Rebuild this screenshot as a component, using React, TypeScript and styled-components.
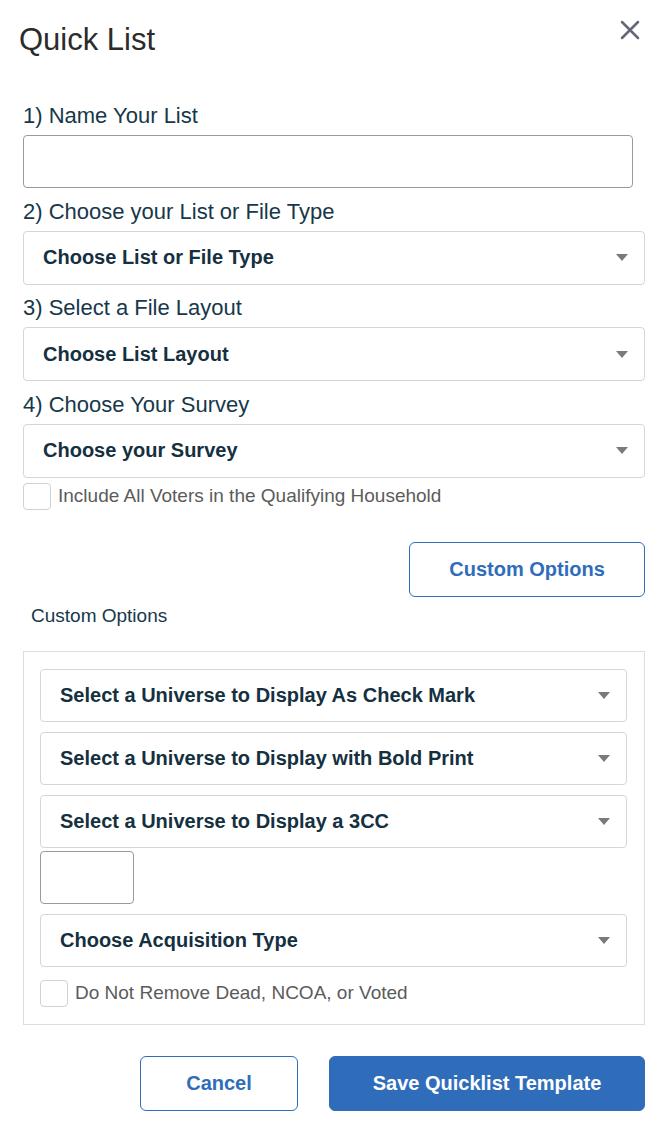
import styled, { createGlobalStyle } from "styled-components";

const GlobalStyle = createGlobalStyle`
  html, body {
    margin: 0;
    padding: 0;
    background: #fff;
    font-family: "Liberation Sans", Arial, sans-serif;
  }
  * {
    box-sizing: border-box;
  }
`;

const Modal = styled.div`
  width: 664px;
  padding: 22px 19px 10px 23px;
`;

const Header = styled.div`
  display: flex;
  justify-content: space-between;
  align-items: flex-start;
  margin-left: -4px;
  margin-bottom: 45px;
`;

const Title = styled.h1`
  margin: 0;
  font-size: 31px;
  line-height: 36px;
  font-weight: 400;
  color: #2b2b2b;
`;

const CloseButton = styled.button`
  border: 0;
  background: none;
  padding: 0;
  margin: -2px 5px 0 0;
  width: 20px;
  height: 20px;
  cursor: pointer;
  display: flex;
`;

const Form = styled.div`
  display: flex;
  flex-direction: column;
`;

const Field = styled.div`
  display: flex;
  flex-direction: column;
  gap: 6px;
  margin-bottom: 10.5px;
`;

const Label = styled.label`
  font-size: 22px;
  line-height: 26px;
  color: #17384a;
`;

const TextInput = styled.input<{ $width?: string }>`
  width: ${(p) => p.$width || "610px"};
  height: 53px;
  border: 1px solid #9a9a9a;
  border-radius: 4px;
  font-family: inherit;
  font-size: 20px;
  padding: 0 12px;
`;

const SelectBox = styled.div<{ $height?: number }>`
  display: flex;
  align-items: center;
  justify-content: space-between;
  height: ${(p) => p.$height ?? 54}px;
  padding: 0 16px 0 19px;
  border: 1px solid #d3d6da;
  border-radius: 4px;
  background: #fff;
  font-size: 20px;
  font-weight: 700;
  color: #15303f;
`;

const Caret = styled.span`
  width: 0;
  height: 0;
  border-left: 6.5px solid transparent;
  border-right: 6.5px solid transparent;
  border-top: 7px solid #7a7a7a;
`;

const CheckRow = styled.label<{ $mb?: number }>`
  display: flex;
  align-items: center;
  gap: 7px;
  margin-top: -5.5px;
  margin-bottom: ${(p) => p.$mb ?? 0}px;
  font-size: 19px;
  color: #5b5b5b;
`;

const CheckBox = styled.span`
  width: 28px;
  height: 27px;
  border: 1px solid #cfd2d6;
  border-radius: 4px;
  background: #fff;
`;

const ButtonRow = styled.div<{ $gap?: number }>`
  display: flex;
  justify-content: flex-end;
  gap: ${(p) => p.$gap ?? 0}px;
`;

const Button = styled.button<{ $primary?: boolean; $width: number }>`
  width: ${(p) => p.$width}px;
  height: 55px;
  border-radius: 6px;
  border: 1px solid #2f6dbb;
  background: ${(p) => (p.$primary ? "#2f6dbb" : "#fff")};
  color: ${(p) => (p.$primary ? "#fff" : "#2f6dbb")};
  font-family: inherit;
  font-size: 20px;
  font-weight: 700;
  cursor: pointer;
`;

const SectionLabel = styled.div`
  margin: 8px 0 24px 8px;
  font-size: 19px;
  line-height: 22px;
  color: #17384a;
`;

const Panel = styled.div`
  display: flex;
  flex-direction: column;
  gap: 10px;
  padding: 17px 17px 17px 16px;
  border: 1px solid #dedede;
  margin-bottom: 31px;
`;

const SmallInput = styled(TextInput)`
  margin-top: -7px;
`;

const PanelCheckRow = styled(CheckRow)`
  margin-top: 3px;
`;

const Select = ({ text, height }: { text: string; height?: number }) => (
  <SelectBox $height={height}>
    <span>{text}</span>
    <Caret />
  </SelectBox>
);

const App = () => {
  return (
    <>
      <GlobalStyle />
      <Modal>
        <Header>
          <Title>Quick List</Title>
          <CloseButton aria-label="Close">
            <svg width="20" height="20" viewBox="0 0 20 20">
              <path
                d="M2 2 L18 18 M18 2 L2 18"
                stroke="#646779"
                strokeWidth="2.5"
                strokeLinecap="round"
              />
            </svg>
          </CloseButton>
        </Header>
        <Form>
          <Field>
            <Label>1) Name Your List</Label>
            <TextInput type="text" />
          </Field>
          <Field>
            <Label>2) Choose your List or File Type</Label>
            <Select text="Choose List or File Type" />
          </Field>
          <Field>
            <Label>3) Select a File Layout</Label>
            <Select text="Choose List Layout" />
          </Field>
          <Field>
            <Label>4) Choose Your Survey</Label>
            <Select text="Choose your Survey" />
          </Field>
          <CheckRow $mb={32}>
            <CheckBox />
            Include All Voters in the Qualifying Household
          </CheckRow>
          <ButtonRow>
            <Button $width={236}>Custom Options</Button>
          </ButtonRow>
          <SectionLabel>Custom Options</SectionLabel>
          <Panel>
            <Select height={53} text="Select a Universe to Display As Check Mark" />
            <Select height={53} text="Select a Universe to Display with Bold Print" />
            <Select height={53} text="Select a Universe to Display a 3CC" />
            <SmallInput type="text" $width="94px" />
            <Select height={53} text="Choose Acquisition Type" />
            <PanelCheckRow>
              <CheckBox />
              Do Not Remove Dead, NCOA, or Voted
            </PanelCheckRow>
          </Panel>
          <ButtonRow $gap={31}>
            <Button $width={158}>Cancel</Button>
            <Button $primary $width={316}>
              Save Quicklist Template
            </Button>
          </ButtonRow>
        </Form>
      </Modal>
    </>
  );
};

export default App;
